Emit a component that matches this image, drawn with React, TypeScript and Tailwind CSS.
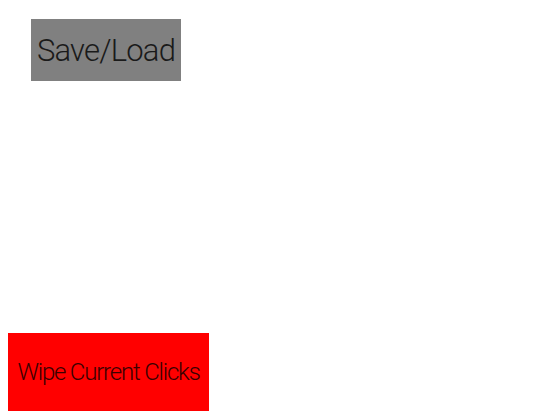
export default function App() {
  return (
    <div className="w-[560px] h-[420px] bg-white flex flex-col items-start font-['Roboto',sans-serif]">
      <button className="ml-[31px] mt-[19px] w-[150px] h-[62px] bg-[#808080] flex items-center justify-center whitespace-nowrap text-[31px] font-light tracking-[-0.8px] text-[#1a1a1a] leading-none">
        Save/Load
      </button>
      <button className="ml-[8px] mt-[252px] w-[201px] h-[78px] bg-[#ff0000] flex items-center justify-center whitespace-nowrap text-[24px] font-light tracking-[-1.2px] text-[#3a0000] leading-none">
        Wipe Current Clicks
      </button>
    </div>
  );
}
